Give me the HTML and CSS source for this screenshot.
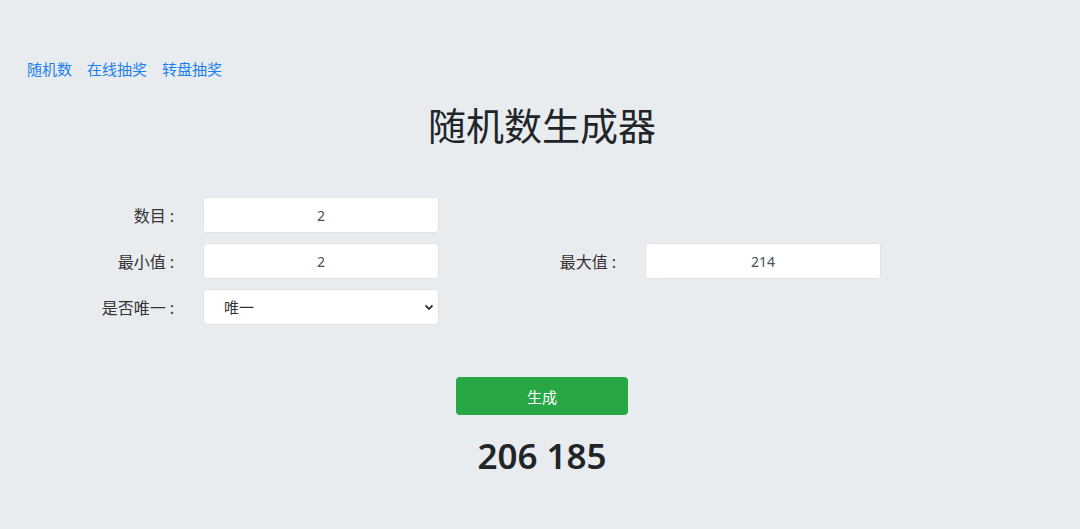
FILE: index.html
```html
<!DOCTYPE html>
<html lang="zh-CN">
<head>
<meta charset="utf-8">
<title>随机数生成器</title>
<link rel="stylesheet" href="styles.css">
</head>
<body>
<nav class="nav">
  <a href="#">随机数</a>
  <a href="#">在线抽奖</a>
  <a href="#">转盘抽奖</a>
</nav>
<h1 class="title">随机数生成器</h1>
<form class="form">
  <label class="label">数目<span class="colon">:</span></label>
  <input class="field" type="text" value="2">
  <span></span><span></span>
  <label class="label">最小值<span class="colon">:</span></label>
  <input class="field" type="text" value="2">
  <label class="label">最大值<span class="colon">:</span></label>
  <input class="field" type="text" value="214">
  <label class="label">是否唯一<span class="colon">:</span></label>
  <select class="field select"><option>唯一</option></select>
</form>
<div class="actions">
  <button class="btn" type="button">生成</button>
</div>
<div class="result">206 185</div>
</body>
</html>
```
FILE: styles.css
```css
html, body {
  margin: 0;
  padding: 0;
}
body {
  background: #e9ecef;
  color: #212529;
  font-family: "Noto Sans", "Noto Sans CJK SC", sans-serif;
  height: 529px;
  overflow: hidden;
}
.nav {
  display: flex;
  gap: 15px;
  padding: 58px 0 0 27px;
  font-size: 15px;
  line-height: 22px;
}
.nav a {
  color: #1a7ff2;
  text-decoration: none;
}
.title {
  margin: 17px 0 0;
  text-align: center;
  font-weight: 400;
  font-size: 38px;
  line-height: 56px;
  padding-left: 4px;
}
.form {
  display: grid;
  grid-template-columns: 179px 236px 158px 236px;
  column-gap: 24px;
  row-gap: 10px;
  margin: 44px 0 0 0;
  padding-left: 0;
  align-items: center;
}
.label {
  text-align: right;
  font-size: 16px;
  color: #333;
  white-space: nowrap;
  padding-right: 5px;
}
.colon {
  margin-left: 4px;
}
.field {
  box-sizing: border-box;
  height: 36px;
  width: 236px;
  border: 1px solid #dfe3e8;
  border-radius: 4px;
  background: #fff;
  font-family: "Noto Sans", "Noto Sans CJK SC", sans-serif;
  font-size: 14px;
  color: #495057;
  text-align: center;
  padding: 0 12px;
  outline: none;
}
.select {
  text-align: left;
  padding-left: 20px;
  font-size: 15px;
  color: #333;
  appearance: none;
  -webkit-appearance: none;
  background-image: url("data:image/svg+xml,%3Csvg xmlns='http://www.w3.org/2000/svg' width='10' height='7' viewBox='0 0 10 7'%3E%3Cpath d='M1.5 1.5 L5 5 L8.5 1.5' fill='none' stroke='%23333' stroke-width='1.8'/%3E%3C/svg%3E");
  background-repeat: no-repeat;
  background-position: right 4px center;
}
.actions {
  display: flex;
  justify-content: center;
  margin-top: 52px;
  padding-left: 4px;
}
.btn {
  width: 172px;
  height: 38px;
  background: #28a745;
  border: none;
  border-radius: 4px;
  color: #fff;
  font-family: "Noto Sans", "Noto Sans CJK SC", sans-serif;
  font-size: 15px;
}
.result {
  text-align: center;
  font-size: 35px;
  font-weight: 600;
  line-height: 50px;
  margin-top: 16px;
  padding-left: 4px;
}
```
